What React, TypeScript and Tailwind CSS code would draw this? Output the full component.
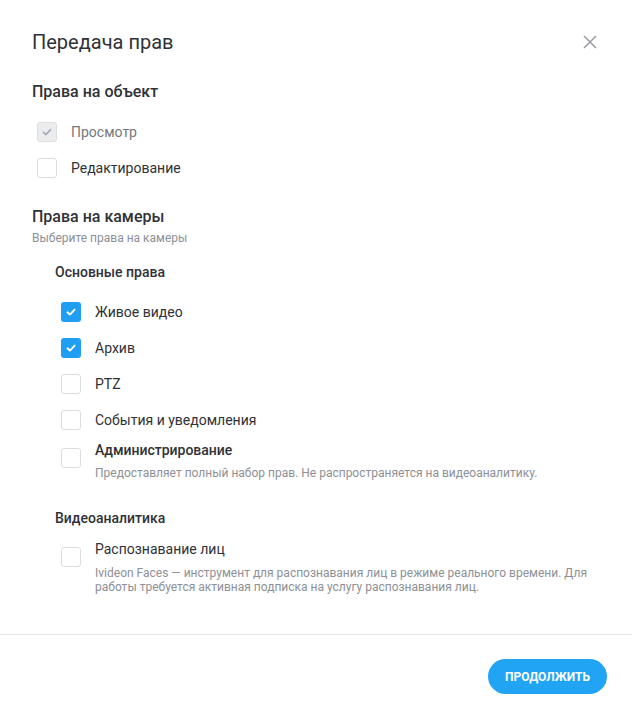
import React from "react";

type BoxProps = { checked?: boolean; disabled?: boolean };

const Box: React.FC<BoxProps> = ({ checked, disabled }) => {
  if (disabled) {
    return (
      <span className="flex h-5 w-5 shrink-0 items-center justify-center rounded-[3px] border border-[#dcdde0] bg-[#ebecee]">
        <svg viewBox="0 0 12 12" className="h-3 w-3" fill="none" stroke="#a9abb0" strokeWidth={1.6} strokeLinecap="round" strokeLinejoin="round">
          <path d="M2.5 6.3l2.4 2.3L9.6 3.6" />
        </svg>
      </span>
    );
  }
  if (checked) {
    return (
      <span className="flex h-5 w-5 shrink-0 items-center justify-center rounded-[3px] bg-[#1f9ef2]">
        <svg viewBox="0 0 12 12" className="h-3 w-3" fill="none" stroke="#fff" strokeWidth={1.9} strokeLinecap="round" strokeLinejoin="round">
          <path d="M2.5 6.3l2.4 2.3L9.6 3.6" />
        </svg>
      </span>
    );
  }
  return <span className="block h-5 w-5 shrink-0 rounded-[3px] border border-[#dcdde0] bg-white" />;
};

const Row: React.FC<{ label: string; checked?: boolean; disabled?: boolean }> = ({ label, checked, disabled }) => (
  <div className="flex h-9 items-center gap-[14px]">
    <Box checked={checked} disabled={disabled} />
    <span className={disabled ? "text-[14px] text-[#74777d]" : "text-[14px] text-[#2f3237]"}>{label}</span>
  </div>
);

export default function App() {
  return (
    <div className="flex h-[716px] w-[632px] flex-col bg-white font-['Roboto',sans-serif] text-[#2f3237]">
      <div className="flex-1 px-8 pt-[30px]">
        <div className="flex items-center justify-between">
          <h1 className="text-[20px] leading-6">Передача прав</h1>
          <svg viewBox="0 0 16 16" className="mr-[2px] h-4 w-4" fill="none" stroke="#9a9ea6" strokeWidth={1.6}>
            <path d="M2 2l12 12M14 2L2 14" />
          </svg>
        </div>

        <h2 className="mt-[28px] text-[16px] font-medium leading-5">Права на объект</h2>
        <div className="mt-[12px] pl-[5px]">
          <Row label="Просмотр" disabled />
          <Row label="Редактирование" />
        </div>

        <h2 className="mt-[21px] text-[16px] font-medium leading-5">Права на камеры</h2>
        <p className="mt-[3px] text-[12px] leading-4 text-[#8d9096]">Выберите права на камеры</p>

        <div className="pl-[23px]">
          <h3 className="mt-[16px] text-[14px] font-medium leading-5">Основные права</h3>
          <div className="mt-[12px] pl-[6px]">
            <Row label="Живое видео" checked />
            <Row label="Архив" checked />
            <Row label="PTZ" />
            <Row label="События и уведомления" />
            <div className="mt-[2px] flex gap-[14px]">
              <div className="pt-[8px]">
                <Box />
              </div>
              <div>
                <div className="text-[14px] font-medium leading-5">Администрирование</div>
                <div className="mt-[6px] text-[12px] leading-[14px] text-[#8d9096]">
                  Предоставляет полный набор прав. Не распространяется на видеоаналитику.
                </div>
              </div>
            </div>
          </div>

          <h3 className="mt-[28px] text-[14px] font-medium leading-5">Видеоаналитика</h3>
          <div className="mt-[11px] flex gap-[14px] pl-[6px]">
            <div className="pt-[8px]">
              <Box />
            </div>
            <div>
              <div className="text-[14px] leading-5">Распознавание лиц</div>
              <div className="mt-[7px] text-[12px] leading-[14px] text-[#8d9096]">
                Ivideon Faces — инструмент для распознавания лиц в режиме реального времени. Для работы требуется активная подписка на услугу распознавания лиц.
              </div>
            </div>
          </div>
        </div>
      </div>

      <div className="border-t border-[#e4e5e7]" />
      <div className="flex h-[81px] items-center justify-end px-[25px] pt-[2px]">
        <button className="h-[35px] rounded-full bg-[#22a4f5] px-[17px] text-[12px] font-bold uppercase text-white">
          Продолжить
        </button>
      </div>
    </div>
  );
}
